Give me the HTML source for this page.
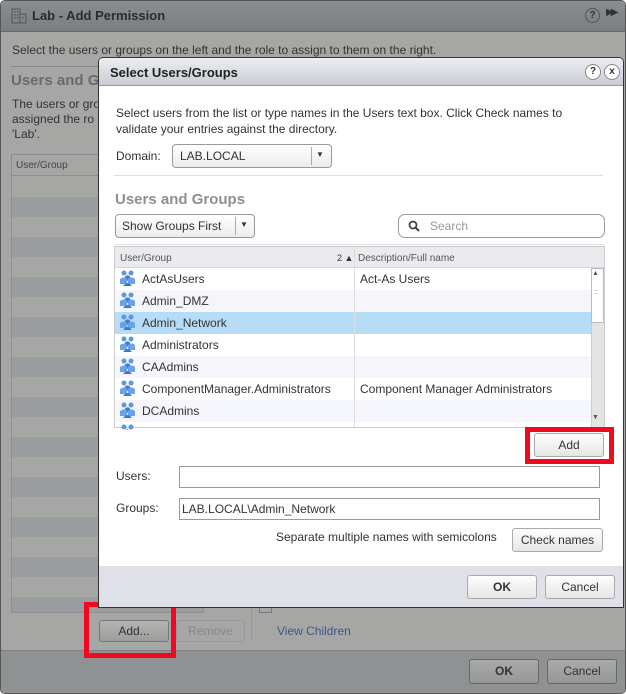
<!DOCTYPE html>
<html><head><meta charset="utf-8"><style>
*{box-sizing:border-box;margin:0;padding:0}
body{width:626px;height:694px;overflow:hidden;font-family:"Liberation Sans",Arial,sans-serif;font-size:12px;color:#333;background:#fff;position:relative}
.a{position:absolute}
.btn{position:absolute;border:1px solid #aaa;border-radius:3px;background:linear-gradient(#fdfdfd,#e6e6e6);text-align:center;font-size:12px;color:#333}
.row{position:absolute;left:0;width:476px;height:22px}
.ic{position:absolute;left:5px;top:3px}
.nm{position:absolute;left:27px;top:4px;font-size:12px;color:#333}
.ds{position:absolute;left:245px;top:4px;font-size:12px;color:#333}
</style></head><body>
<!-- outer dialog (dimmed) -->
<div class="a" style="left:0;top:0;width:626px;height:694px;background:#a6a6a5;border:1px solid #555;border-radius:5px"></div>
<div class="a" style="left:1px;top:1px;width:624px;height:31px;background:linear-gradient(#8a8e90,#7a7e80);border-bottom:1px solid #666;border-radius:5px 5px 0 0"></div>
<svg class="a" style="left:11px;top:8px" width="16" height="16"><rect x="1" y="1" width="8" height="14" fill="none" stroke="#555"/><rect x="9" y="6" width="6" height="9" fill="none" stroke="#555"/><g fill="#555"><rect x="3" y="3" width="1.5" height="1.5"/><rect x="6" y="3" width="1.5" height="1.5"/><rect x="3" y="6" width="1.5" height="1.5"/><rect x="6" y="6" width="1.5" height="1.5"/><rect x="3" y="9" width="1.5" height="1.5"/><rect x="6" y="9" width="1.5" height="1.5"/><rect x="11" y="9" width="1.5" height="1.5"/></g></svg>
<div class="a" style="left:32px;top:8px;font-size:13px;font-weight:bold;color:#2c2c2c">Lab - Add Permission</div>
<div class="a" style="left:585px;top:8px;width:15px;height:15px;border:1px solid #555;border-radius:50%;font-size:10px;text-align:center;line-height:13px;color:#333;font-weight:bold">?</div>
<div class="a" style="left:606px;top:7px;font-size:10px;color:#333;letter-spacing:-3px">▶▶</div>
<div class="a" style="left:12px;top:43px;color:#333">Select the users or groups on the left and the role to assign to them on the right.</div>
<div class="a" style="left:11px;top:66px;width:90px;border-top:1px solid #888"></div>
<div class="a" style="left:11px;top:72px;font-size:15px;font-weight:bold;color:#6a6a6a">Users and Gr</div>
<div class="a" style="left:12px;top:97px;line-height:15px;color:#333">The users or gro<br>assigned the ro<br>'Lab'.</div>
<div class="a" style="left:11px;top:154px;width:193px;height:459px;border:1px solid #8e8e8e;background:repeating-linear-gradient(#a6a6a5 0 20px,#999da0 20px 40px);background-position:0 22px"></div>
<div class="a" style="left:12px;top:155px;width:191px;height:21px;background:#a6a6a5;border-bottom:1px solid #8e8e8e;font-size:10px;color:#444;padding:5px 4px">User/Group</div>
<div class="btn" style="left:99px;top:620px;width:70px;height:22px;line-height:20px;background:linear-gradient(#b4b4b3,#9d9d9c);border-color:#777">Add...</div>
<div class="btn" style="left:176px;top:620px;width:69px;height:22px;line-height:20px;background:#a6a6a5;border-color:#999;color:#888">Remove</div>
<div class="a" style="left:251px;top:590px;height:50px;border-left:1px solid #999"></div>
<div class="a" style="left:259px;top:600px;width:13px;height:13px;border:1px solid #777"></div>
<div class="a" style="left:277px;top:624px;color:#3a5a86;font-size:12px">View Children</div>
<div class="a" style="left:1px;top:650px;width:624px;height:43px;background:#8e9292;border-top:1px solid #808080;border-radius:0 0 5px 5px"></div>
<div class="btn" style="left:469px;top:659px;width:70px;height:25px;line-height:23px;font-weight:bold;background:linear-gradient(#aaa,#979797);border-color:#666">OK</div>
<div class="btn" style="left:547px;top:659px;width:70px;height:25px;line-height:23px;background:linear-gradient(#aaa,#979797);border-color:#666">Cancel</div>
<!-- red highlight outer -->
<div class="a" style="left:84px;top:602px;width:92px;height:56px;border:5px solid #f0091f"></div>

<!-- inner dialog -->
<div class="a" style="left:98px;top:57px;width:526px;height:551px;background:#fff;border:1px solid #333;border-radius:5px 5px 0 0;overflow:hidden">
 <div class="a" style="left:0;top:0;width:524px;height:28px;background:linear-gradient(#eceef1,#c9ccd3);border-bottom:1px solid #999"></div>
 <div class="a" style="left:11px;top:7px;font-size:13px;font-weight:bold;color:#222">Select Users/Groups</div>
 <div class="a" style="left:486px;top:6px;width:16px;height:16px;border:1px solid #888;border-radius:50%;background:#fff;font-size:10px;font-weight:bold;text-align:center;line-height:14px">?</div>
 <div class="a" style="left:505px;top:6px;width:16px;height:16px;border:1px solid #888;border-radius:50%;background:#fff;font-size:10px;font-weight:bold;text-align:center;line-height:14px">x</div>
 <div class="a" style="left:17px;top:47px;line-height:16px;color:#333">Select users from the list or type names in the Users text box. Click Check names to<br>validate your entries against the directory.</div>
 <div class="a" style="left:17px;top:91px">Domain:</div>
 <div class="a" style="left:73px;top:86px;width:160px;height:24px;border:1px solid #999;border-radius:4px;background:linear-gradient(#fff,#ececec)"><span class="a" style="left:7px;top:4px">LAB.LOCAL</span><span class="a" style="left:138px;top:2px;height:18px;border-left:1px solid #aaa"></span><span class="a" style="left:143px;top:5px;font-size:8px">▼</span></div>
 <div class="a" style="left:15px;top:117px;width:489px;border-top:1px solid #ddd"></div>
 <div class="a" style="left:16px;top:133px;font-size:15px;font-weight:bold;color:#8f8f8f">Users and Groups</div>
 <div class="a" style="left:16px;top:156px;width:140px;height:24px;border:1px solid #999;border-radius:4px;background:linear-gradient(#fff,#ececec)"><span class="a" style="left:6px;top:4px">Show Groups First</span><span class="a" style="left:119px;top:2px;height:18px;border-left:1px solid #aaa"></span><span class="a" style="left:124px;top:5px;font-size:8px">▼</span></div>
 <div class="a" style="left:299px;top:156px;width:207px;height:24px;border:1px solid #999;border-radius:7px;background:#fff"><svg class="a" style="left:9px;top:5px" width="13" height="13"><circle cx="5" cy="5" r="3.5" fill="none" stroke="#444" stroke-width="1.8"/><line x1="7.5" y1="7.5" x2="11" y2="11" stroke="#444" stroke-width="2"/></svg><span class="a" style="left:31px;top:4px;color:#999">Search</span></div>
 <div class="a" style="left:16px;top:186px;width:490px;border-top:1px solid #ddd"></div>
 <!-- table -->
 <div class="a" style="left:15px;top:188px;width:491px;height:182px;border:1px solid #ccc;overflow:hidden">
  <div class="a" style="left:0;top:0;width:489px;height:21px;background:#e9ebef;border-bottom:1px solid #d5d5d5"></div>
  <div class="a" style="left:5px;top:6px;font-size:10px;color:#555">User/Group</div>
  <div class="a" style="left:222px;top:6px;font-size:9px;color:#333">2 ▲</div>
  <div class="a" style="left:239px;top:0;height:182px;border-left:1px solid #ddd"></div>
  <div class="a" style="left:243px;top:6px;font-size:10px;color:#555">Description/Full name</div>
  <div class="a" style="left:0;top:21px;width:489px;height:160px">
   <div class="row" style="top:0;background:#fff"><span class="nm">ActAsUsers</span><span class="ds">Act-As Users</span></div>
   <div class="row" style="top:22px;background:#f5f6fb"><span class="nm">Admin_DMZ</span></div>
   <div class="row" style="top:44px;background:#b6dcf8"><span class="nm">Admin_Network</span></div>
   <div class="row" style="top:66px;background:#fff"><span class="nm">Administrators</span></div>
   <div class="row" style="top:88px;background:#f5f6fb"><span class="nm">CAAdmins</span></div>
   <div class="row" style="top:110px;background:#fff"><span class="nm">ComponentManager.Administrators</span><span class="ds">Component Manager Administrators</span></div>
   <div class="row" style="top:132px;background:#f5f6fb"><span class="nm">DCAdmins</span></div>
   <div class="row" style="top:154px;background:#fff"></div>
   <div class="a" style="left:239px;top:0;height:160px;border-left:1px solid #ddd"></div>
  </div>
  <div class="a" style="left:476px;top:21px;width:13px;height:159px;background:#e4e4e4;border-left:1px solid #ccc"></div>
  <div class="a" style="left:476px;top:21px;width:13px;height:55px;background:#fff;border:1px solid #bbb"><span class="a" style="left:2px;top:20px;font-size:7px;color:#555">::</span></div>
  <div class="a" style="left:477px;top:23px;font-size:7px;color:#555">▲</div>
  <div class="a" style="left:477px;top:167px;font-size:7px;color:#555">▼</div>
 </div>
 <svg class="a" style="left:21px;top:212px" width="16" height="160">
  <defs><g id="g"><circle cx="4" cy="3" r="2.5" fill="#5b97e4"/><circle cx="11" cy="3" r="2.5" fill="#5b97e4"/><circle cx="7.5" cy="8" r="2.8" fill="#3f7fd6"/><path d="M0 9q4-3 7 0v5H0zM8 9q4-3 7 0v5H8z" fill="#6aa3ea"/><path d="M3 16q4.5-6 9 0z" fill="#3a78d0"/></g></defs>
  <use href="#g" y="0"/><use href="#g" y="22"/><use href="#g" y="44"/><use href="#g" y="66"/><use href="#g" y="88"/><use href="#g" y="110"/><use href="#g" y="132"/><use href="#g" y="154"/>
 </svg>
 <div class="btn" style="left:435px;top:375px;width:70px;height:24px;line-height:22px">Add</div>
 <div class="a" style="left:17px;top:411px;color:#333">Users:</div>
 <div class="a" style="left:80px;top:408px;width:421px;height:22px;border:1px solid #999;background:#fff"></div>
 <div class="a" style="left:17px;top:443px;color:#333">Groups:</div>
 <div class="a" style="left:80px;top:440px;width:421px;height:22px;border:1px solid #999;background:#fff"><span class="a" style="left:2px;top:3px">LAB.LOCAL\Admin_Network</span></div>
 <div class="a" style="left:177px;top:472px;color:#333">Separate multiple names with semicolons</div>
 <div class="btn" style="left:413px;top:470px;width:91px;height:24px;line-height:22px">Check names</div>
 <div class="a" style="left:0;top:508px;width:524px;height:43px;background:#dfe0e8"></div>
 <div class="btn" style="left:368px;top:517px;width:70px;height:24px;line-height:22px;font-weight:bold">OK</div>
 <div class="btn" style="left:446px;top:517px;width:70px;height:24px;line-height:22px">Cancel</div>
</div>
<!-- red highlight inner -->
<div class="a" style="left:525px;top:427px;width:89px;height:37px;border:5px solid #f0091f"></div>
</body></html>
